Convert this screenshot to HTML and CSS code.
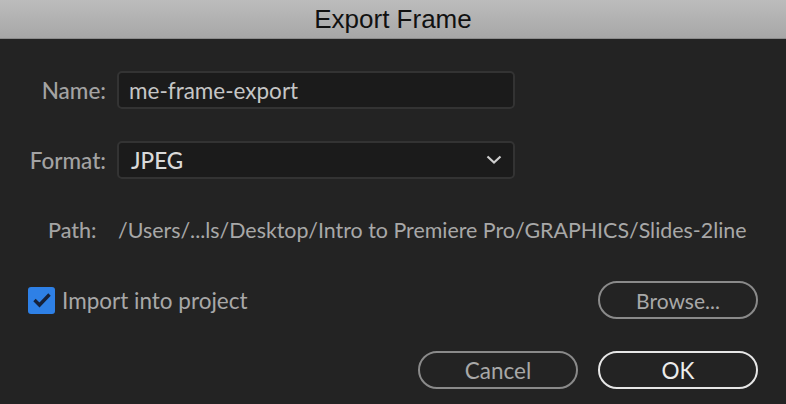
FILE: index.html
```html
<!DOCTYPE html>
<html>
<head>
<meta charset="utf-8">
<link rel="stylesheet" href="styles.css">
</head>
<body>
<div class="dialog">
  <div class="titlebar"><span class="title">Export Frame</span></div>
  <div class="content">
    <div class="row">
      <label class="label">Name:</label>
      <div class="field input">me-frame-export</div>
    </div>
    <div class="row">
      <label class="label">Format:</label>
      <div class="field select">
        <span class="select-value">JPEG</span>
        <svg class="chevron" width="16" height="10" viewBox="0 0 16 10"><path d="M1.5 1.5 L8 7.5 L14.5 1.5" fill="none" stroke="#cfcfcf" stroke-width="2.2"/></svg>
      </div>
    </div>
    <div class="row path-row">
      <span class="path-label">Path:</span>
      <span class="path-value">/Users/...ls/Desktop/Intro to Premiere Pro/GRAPHICS/Slides-2line</span>
    </div>
    <div class="row check-row">
      <div class="check">
        <span class="box"><svg width="20" height="16" viewBox="0 0 20 16"><path d="M2.5 8 L7.5 13 L17.5 2.5" fill="none" stroke="#16213a" stroke-width="3.4"/></svg></span>
        <span class="check-label">Import into project</span>
      </div>
      <button class="btn browse">Browse...</button>
    </div>
    <div class="row buttons">
      <button class="btn">Cancel</button>
      <button class="btn primary">OK</button>
    </div>
  </div>
</div>
</body>
</html>
```

FILE: styles.css
```css
* { box-sizing: border-box; }
html, body { margin: 0; padding: 0; }
body {
  width: 786px;
  height: 404px;
  background: #232323;
  font-family: "Lato", "Open Sans", sans-serif;
  overflow: hidden;
}
.dialog { display: flex; flex-direction: column; height: 404px; }
.titlebar {
  height: 39px;
  background: linear-gradient(#bcbcbc, #a7a7a7);
  border-bottom: 1px solid #8c8c8c;
  display: flex;
  align-items: center;
  justify-content: center;
}
.title {
  font-family: "Liberation Sans", sans-serif;
  font-size: 26px;
  color: #111;
}
.content {
  display: flex;
  flex-direction: column;
  gap: 32px;
  padding: 32px 28px 0 28px;
}
.row {
  display: flex;
  align-items: center;
  height: 38px;
  font-size: 22.5px;
}
.label {
  width: 78px;
  text-align: right;
  color: #a3a3a3;
  margin-right: 11px;
  font-weight: 500;
}
.field {
  width: 398px;
  height: 38px;
  background: #1b1b1b;
  border: 2px solid #333;
  border-radius: 5px;
  display: flex;
  align-items: center;
  padding: 0 10px;
}
.input { color: #c6c6c6; }
.select { justify-content: space-between; color: #dadada; padding-left: 12px; font-weight: 500; }
.chevron { margin-right: 1px; }
.path-label { color: #a3a3a3; margin-left: 20px; width: 70px; font-size: 21.5px; font-weight: 500; }
.path-value { color: #a8a8a8; font-size: 21.4px; }
.check-row { justify-content: space-between; }
.check { display: flex; align-items: center; }
.box {
  width: 27px; height: 27px;
  background: #2e80e6;
  border-radius: 3px;
  display: flex; align-items: center; justify-content: center;
  margin-right: 7px;
}
.check-label { color: #a8a8a8; }
.btn {
  width: 160px;
  height: 38px;
  border: 2px solid #8a8a8a;
  border-radius: 19px;
  background: transparent;
  color: #a8a8a8;
  font-family: inherit;
  font-size: 22.5px;
  padding: 0;
}
.btn.browse { font-size: 21px; }
.buttons { justify-content: flex-end; gap: 20px; }
.btn.primary { border-color: #e6e6e6; color: #ececec; }
```
